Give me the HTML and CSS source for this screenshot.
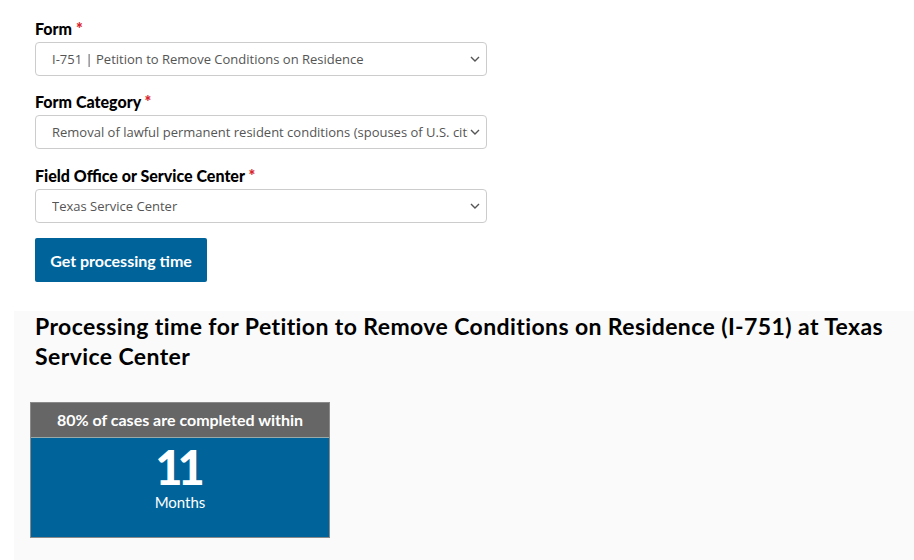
FILE: index.html
```html
<!DOCTYPE html>
<html lang="en">
<head>
  <meta charset="UTF-8" />
  <title>Check Case Processing Times</title>
  <meta name="viewport" content="width=device-width, initial-scale=1.0"/>
  <link rel="stylesheet" href="styles.css">
</head>
<body>
  <form class="time-form">
    <div class="field">
      <label for="form">Form <span class="req">*</span></label>
      <div class="select-wrap">
        <select id="form">
          <option>I-751 | Petition to Remove Conditions on Residence</option>
        </select>
        <svg class="chevron" width="10" height="6" viewBox="0 0 10 6"><path d="M1 1l4 4 4-4" fill="none" stroke="#555" stroke-width="1.4"/></svg>
      </div>
    </div>

    <div class="field">
      <label for="category">Form Category <span class="req">*</span></label>
      <div class="select-wrap">
        <select id="category">
          <option>Removal of lawful permanent resident conditions (spouses of U.S. citizens and lawful permanent residents)</option>
        </select>
        <svg class="chevron" width="10" height="6" viewBox="0 0 10 6"><path d="M1 1l4 4 4-4" fill="none" stroke="#555" stroke-width="1.4"/></svg>
      </div>
    </div>

    <div class="field field-last">
      <label for="office">Field Office or Service Center <span class="req">*</span></label>
      <div class="select-wrap">
        <select id="office">
          <option>Texas Service Center</option>
        </select>
        <svg class="chevron" width="10" height="6" viewBox="0 0 10 6"><path d="M1 1l4 4 4-4" fill="none" stroke="#555" stroke-width="1.4"/></svg>
      </div>
    </div>

    <button type="button" class="get-btn">Get processing time</button>
  </form>

  <section class="result">
    <h2 class="result-title">Processing time for Petition to Remove Conditions on Residence (I-751) at Texas Service Center</h2>

    <div class="time-card">
      <div class="time-card-head">80% of cases are completed within</div>
      <div class="time-card-body">
        <span class="time-num">11</span>
        <span class="time-unit">Months</span>
      </div>
    </div>
  </section>
</body>
</html>
```

FILE: styles.css
```css
:root {
  --blue: #00639a;
  --gray-head: #666666;
  --panel: #fafafa;
  --red: #d8232a;
}

body {
  margin: 0;
  font-family: Lato, "Open Sans", sans-serif;
  color: #000;
  background: #fff;
}

.time-form {
  padding: 19px 0 0 35px;
  width: 452px;
}

.field {
  margin-bottom: 16px;
}

.field-last {
  margin-top: 17px;
}

.field label {
  display: block;
  font-weight: 900;
  font-size: 16px;
  line-height: 20px;
  margin-bottom: 3px;
}

.req {
  color: var(--red);
}

.select-wrap {
  position: relative;
}

.select-wrap select {
  appearance: none;
  -webkit-appearance: none;
  width: 100%;
  height: 34px;
  padding: 0 18px 0 16px;
  border: 1px solid #ccc;
  border-radius: 4px;
  background: #fff;
  font-family: "Open Sans", sans-serif;
  font-size: 13px;
  color: #555;
}

.chevron {
  position: absolute;
  right: 7px;
  top: 14px;
  pointer-events: none;
}

.get-btn {
  display: block;
  margin-top: -1px;
  width: 172px;
  height: 44px;
  border: none;
  border-radius: 2px;
  background: var(--blue);
  color: #fff;
  font-family: Lato, sans-serif;
  font-weight: 700;
  font-size: 16px;
  cursor: pointer;
}

.result {
  margin: 29px 0 0 14px;
  padding: 0 0 22px 21px;
  background: var(--panel);
}

.result-title {
  max-width: 860px;
  margin: 0 0 31px 0;
  font-size: 23px;
  line-height: 30px;
  font-weight: 700;
  letter-spacing: 0.4px;
}

.time-card {
  width: 298px;
  margin-left: -5px;
  border: 1px solid #8a8a8a;
  color: #fff;
  text-align: center;
}

.time-card-head {
  background: var(--gray-head);
  height: 34px;
  line-height: 34px;
  font-weight: 700;
  font-size: 16px;
  border-bottom: 1px solid #9aa;
}

.time-card-body {
  background: var(--blue);
  height: 99px;
  display: flex;
  flex-direction: column;
  align-items: center;
  padding-top: 5px;
  box-sizing: border-box;
}

.time-num {
  font-size: 47px;
  font-weight: 900;
  line-height: 48px;
  letter-spacing: -5px;
  margin-left: -5px;
}

.time-unit {
  margin-top: 2px;
  font-size: 15px;
  line-height: 18px;
}
```
